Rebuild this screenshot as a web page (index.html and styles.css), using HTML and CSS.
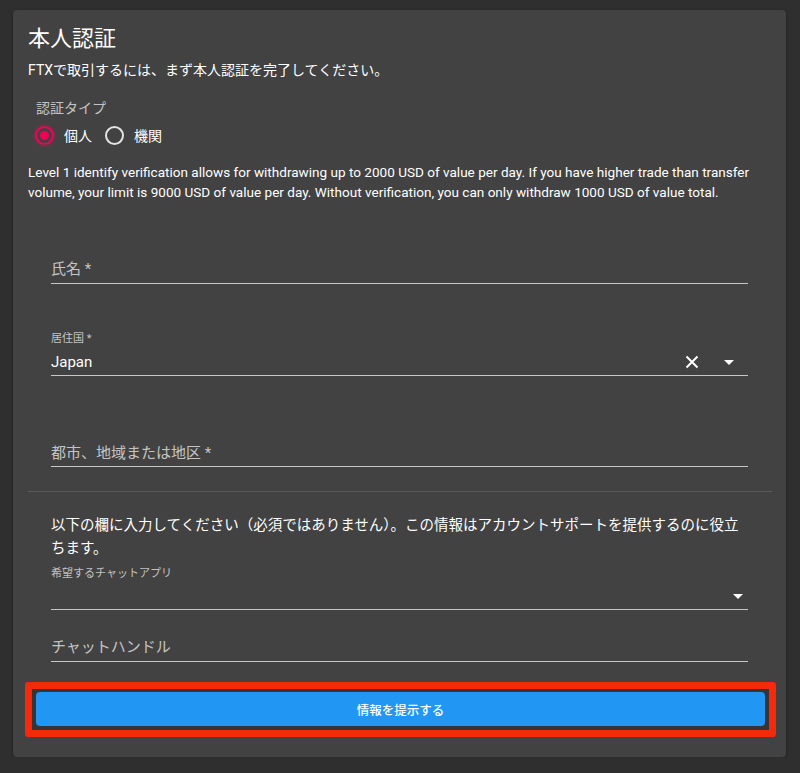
FILE: index.html
```html
<!DOCTYPE html>
<html lang="ja">
<head>
<meta charset="utf-8">
<link rel="stylesheet" href="styles.css">
</head>
<body>
<div class="card">
  <h1 class="title">本人認証</h1>
  <p class="subtitle">FTXで取引するには、まず本人認証を完了してください。</p>
  <div class="type-label">認証タイプ</div>
  <div class="radio-row">
    <label class="radio checked"><span class="ring"><span class="dot"></span></span><span class="rtext">個人</span></label>
    <label class="radio"><span class="ring"></span><span class="rtext">機関</span></label>
  </div>
  <p class="info">Level 1 identify verification allows for withdrawing up to 2000 USD of value per day. If you have higher trade than transfer volume, your limit is 9000 USD of value per day. Without verification, you can only withdraw 1000 USD of value total.</p>

  <div class="fields">
    <div class="field f-name"><span class="placeholder">氏名 *</span></div>
    <div class="field f-country">
      <div class="small-label">居住国 *</div>
      <div class="value-row">
        <span class="value">Japan</span>
        <span class="icons">
          <svg class="clear" width="14" height="14" viewBox="0 0 14 14"><path d="M1.5 1.5 L12.5 12.5 M12.5 1.5 L1.5 12.5" stroke="#fff" stroke-width="2" fill="none"/></svg>
          <svg class="caret" width="10" height="5" viewBox="0 0 10 5"><path d="M0 0 L10 0 L5 5 Z" fill="#fff"/></svg>
        </span>
      </div>
    </div>
    <div class="field f-city"><span class="placeholder">都市、地域または地区 *</span></div>
  </div>

  <div class="divider"></div>

  <div class="fields">
    <p class="optional">以下の欄に入力してください（必須ではありません）。この情報はアカウントサポートを提供するのに役立ちます。</p>
    <div class="small-label app-label">希望するチャットアプリ</div>
    <div class="field f-app">
      <svg class="caret" width="10" height="5" viewBox="0 0 10 5"><path d="M0 0 L10 0 L5 5 Z" fill="#fff"/></svg>
    </div>
    <div class="field f-handle"><span class="placeholder">チャットハンドル</span></div>
  </div>

  <div class="submit-wrap">
    <button class="submit">情報を提示する</button>
  </div>
</div>
</body>
</html>
```

FILE: styles.css
```css
* { box-sizing: border-box; }
html, body {
  margin: 0;
  padding: 0;
  background: #2f2f2f;
}
body {
  font-family: Roboto, "Noto Sans CJK JP", sans-serif;
  color: #fff;
  padding: 10px 14px 0 13px;
}
.card {
  background: #424242;
  border-radius: 4px;
  height: 747px;
  padding: 15px 15px 0 15px;
  box-shadow: 0 1px 3px rgba(0,0,0,0.4);
}
.title {
  margin: 0;
  font-size: 22px;
  line-height: 28px;
  font-weight: 400;
}
.subtitle {
  margin: 7px 0 0 0;
  font-size: 14px;
  line-height: 20px;
}
.type-label {
  margin: 18px 0 0 8px;
  font-size: 14px;
  line-height: 20px;
  color: rgba(255,255,255,0.7);
}
.radio-row {
  display: flex;
  align-items: center;
  gap: 13px;
  margin: 6px 0 0 7px;
  height: 22px;
}
.radio {
  display: flex;
  align-items: center;
  gap: 10px;
  font-size: 14px;
}
.ring {
  width: 19px;
  height: 19px;
  border: 2px solid rgba(255,255,255,0.85);
  border-radius: 50%;
  display: flex;
  align-items: center;
  justify-content: center;
}
.radio.checked .ring {
  border-color: #f50057;
  box-shadow: 0 0 0 2px rgba(245,0,87,0.18);
}
.dot {
  width: 9px;
  height: 9px;
  border-radius: 50%;
  background: #f50057;
}
.info {
  margin: 16px 0 0 0;
  font-size: 13.55px;
  line-height: 20px;
}
.fields {
  margin: 0 23px;
}
.field {
  border-bottom: 1px solid rgba(255,255,255,0.7);
  font-size: 15px;
  line-height: 20px;
}
.placeholder {
  color: rgba(255,255,255,0.7);
}
.f-name {
  margin-top: 57px;
  padding-bottom: 4px;
}
.f-country {
  margin-top: 48px;
  padding-bottom: 3px;
}
.small-label {
  font-size: 11px;
  line-height: 14px;
  color: rgba(255,255,255,0.7);
}
.value-row {
  display: flex;
  align-items: center;
  justify-content: space-between;
  margin-top: 6px;
}
.icons {
  display: flex;
  align-items: center;
  gap: 25px;
  margin-right: 14px;
}
.f-city {
  margin-top: 67px;
  padding-bottom: 3px;
}
.divider {
  height: 1px;
  background: rgba(255,255,255,0.12);
  margin: 24px -1px 0 0;
}
.optional {
  margin: 22px 0 0 0;
  font-size: 14.5px;
  line-height: 23px;
}
.app-label {
  margin-top: 7px;
}
.f-app {
  height: 29px;
  display: flex;
  justify-content: flex-end;
  align-items: center;
  padding: 2px 5px 0 0;
}
.f-handle {
  margin-top: 27px;
  padding-bottom: 4px;
}
.submit-wrap {
  margin: 20px -5px 0 -3px;
  border: 7px solid #f52a0a;
  border-radius: 3px;
  padding: 3px 4px 4px 4px;
  background: #33353a;
}
.submit {
  display: block;
  width: 100%;
  height: 34px;
  border: 0;
  border-radius: 4px;
  background: #2196f3;
  color: #fff;
  font-family: Roboto, "Noto Sans CJK JP", sans-serif;
  font-size: 12.5px;
  font-weight: 500;
  padding: 0;
}
```
